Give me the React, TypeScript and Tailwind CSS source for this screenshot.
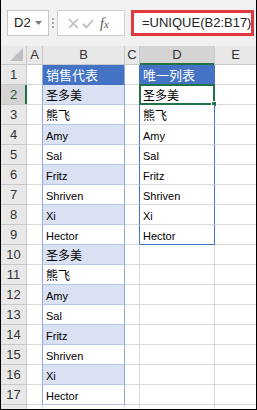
import clsx from 'clsx'

// datos de la hoja
const names = ['圣多美', '熊飞', 'Amy', 'Sal', 'Fritz', 'Shriven', 'Xi', 'Hector']
const colB = ['销售代表', ...names, ...names]
const colD = ['唯一列表', ...names]

function isCjk(text: string) {
  return /[\u4e00-\u9fff]/.test(text)
}

function CellText({ text, light }: { text: string; light?: boolean }) {
  return (
    <span
      className={clsx(
        'pl-[3px] leading-none whitespace-nowrap',
        isCjk(text) ? 'text-[12px]' : 'text-[11px]',
        light ? 'text-white text-[13px]' : 'text-black'
      )}
    >
      {text}
    </span>
  )
}

function Toolbar() {
  return (
    <div className="flex h-[46px] items-start bg-[#f1f1f1] pl-[6px] pt-[10px]">
      {/* cuadro de nombre */}
      <div className="flex h-[26px] w-[42px] items-center justify-between border border-[#c6c6c6] bg-white pl-[6px] pr-[6px]">
        <span className="text-[13px] text-[#222]">D2</span>
        <svg width="7" height="4" viewBox="0 0 7 4">
          <path d="M0 0 L7 0 L3.5 4 Z" fill="#777" />
        </svg>
      </div>
      <div className="flex h-[26px] w-[8px] flex-col items-center justify-center gap-[2px]">
        <div className="h-[2px] w-[2px] bg-[#a8a8a8]" />
        <div className="h-[2px] w-[2px] bg-[#a8a8a8]" />
        <div className="h-[2px] w-[2px] bg-[#a8a8a8]" />
      </div>
      {/* botones de formula */}
      <div className="flex h-[26px] w-[68px] items-center gap-[3px] border border-[#d0d0d0] bg-white pl-[10px]">
        <svg width="11" height="11" viewBox="0 0 11 11">
          <path d="M1 1 L10 10 M10 1 L1 10" stroke="#bdbdbd" strokeWidth="1.6" />
        </svg>
        <svg width="12" height="11" viewBox="0 0 12 11">
          <path d="M1 6 L4.5 9.5 L11 2" stroke="#bdbdbd" strokeWidth="1.8" fill="none" />
        </svg>
        <span className="ml-[3px] font-['Liberation_Serif',serif] text-[14px] italic text-[#555]">
          f<span className="text-[11px]">x</span>
        </span>
      </div>
      <div className="ml-[6px] flex h-[26px] w-[123px] items-center border-[3px] border-[#e03a3e] bg-white pl-[8px]">
        <span className="text-[13px] text-[#222] whitespace-nowrap">=UNIQUE(B2:B17)</span>
      </div>
    </div>
  )
}

function HeaderRow() {
  const cell = 'flex h-full items-center justify-center border-r border-[#c8c8c8] text-[13px] text-[#333]'
  return (
    <div className="flex h-[19px] border-b border-[#c8c8c8] bg-[#e8e8e8]">
      <div className="relative h-full w-[26px] border-r border-[#c8c8c8]">
        <svg className="absolute left-[9px] top-[2px]" width="13" height="13" viewBox="0 0 13 13">
          <path d="M13 0 L13 13 L0 13 Z" fill="#bfbfbf" />
        </svg>
      </div>
      <div className={clsx(cell, 'w-[16px]')}>A</div>
      <div className={clsx(cell, 'w-[82px]')}>B</div>
      <div className={clsx(cell, 'w-[15px]')}>C</div>
      <div className={clsx(cell, 'relative w-[75px] bg-[#d4d4d4] text-[#215a36]')}>
        D
        <div className="absolute bottom-[-1px] left-0 right-0 h-[2px] bg-[#217346]" />
      </div>
      <div className={clsx(cell, 'flex-1 border-r-0')}>E</div>
    </div>
  )
}

function Row({ r }: { r: number }) {
  const b = colB[r - 1]
  const d = r <= colD.length ? colD[r - 1] : undefined
  const blueHead = r === 1
  const band = r % 2 === 0
  const inD = r >= 2 && r <= 9
  const selected = r === 2

  return (
    <div className="flex h-[20px]">
      {/* encabezado de fila */}
      <div
        className={clsx(
          'relative flex h-full w-[26px] items-center justify-center border-b border-r border-[#c8c8c8] text-[13px]',
          selected ? 'bg-[#d4d4d4] text-[#215a36]' : 'bg-[#e8e8e8] text-[#333]'
        )}
      >
        {r}
        {selected && <div className="absolute right-[-1px] top-0 bottom-0 w-[2px] bg-[#217346]" />}
      </div>
      {/* A */}
      <div className="h-full w-[16px] border-b border-r border-b-[#d9d9d9] border-r-[#8ea9db]" />
      {/* B */}
      <div
        className={clsx(
          'flex h-full w-[82px] items-end border-b border-r border-r-[#8ea9db] pb-[2px]',
          blueHead ? 'bg-[#4472c4] border-b-[#4472c4]' : band ? 'bg-[#d9e1f2] border-b-[#b4c6e7]' : 'bg-white border-b-[#b4c6e7]'
        )}
      >
        <CellText text={b} light={blueHead} />
      </div>
      {/* C */}
      <div
        className={clsx(
          'h-full w-[15px] border-b border-r border-b-[#d9d9d9]',
          inD || blueHead ? 'border-r-[#4472c4]' : 'border-r-[#d9d9d9]'
        )}
      />
      {/* D */}
      <div
        className={clsx(
          'relative flex h-full w-[75px] items-end border-b border-r pb-[2px]',
          blueHead && 'bg-[#4472c4] border-b-[#4472c4] border-r-[#4472c4]',
          inD && 'bg-white border-r-[#4472c4]',
          inD && (r === 9 ? 'border-b-[#4472c4]' : 'border-b-[#d6dce8]'),
          !blueHead && !inD && 'border-b-[#d9d9d9] border-r-[#d9d9d9]'
        )}
      >
        {d && <CellText text={d} light={blueHead} />}
        {selected && (
          <div className="absolute -left-[1px] -top-[1px] -right-[1px] -bottom-[1px] border-2 border-[#217346]">
            <div className="absolute -bottom-[4px] -right-[4px] h-[6px] w-[6px] border border-white bg-[#217346]" />
          </div>
        )}
      </div>
      {/* E */}
      <div className="h-full flex-1 border-b border-b-[#d9d9d9]" />
    </div>
  )
}

export default function App() {
  const rows = Array.from({ length: 17 }, (_, i) => i + 1)
  return (
    <div className="h-[410px] w-[257px] overflow-hidden border-x border-b border-black bg-white font-['Liberation_Sans','Noto_Sans_CJK_SC',sans-serif]">
      <Toolbar />
      <HeaderRow />
      {rows.map((r) => (
        <Row key={r} r={r} />
      ))}
      {/* fila parcial al final */}
      <div className="flex h-[4px]">
        <div className="h-full w-[26px] border-r border-[#c8c8c8] bg-[#e8e8e8]" />
        <div className="h-full w-[16px] border-r border-[#d9d9d9]" />
        <div className="h-full w-[82px] border-r border-[#d9d9d9]" />
        <div className="h-full w-[15px] border-r border-[#d9d9d9]" />
        <div className="h-full w-[75px] border-r border-[#d9d9d9]" />
      </div>
    </div>
  )
}
